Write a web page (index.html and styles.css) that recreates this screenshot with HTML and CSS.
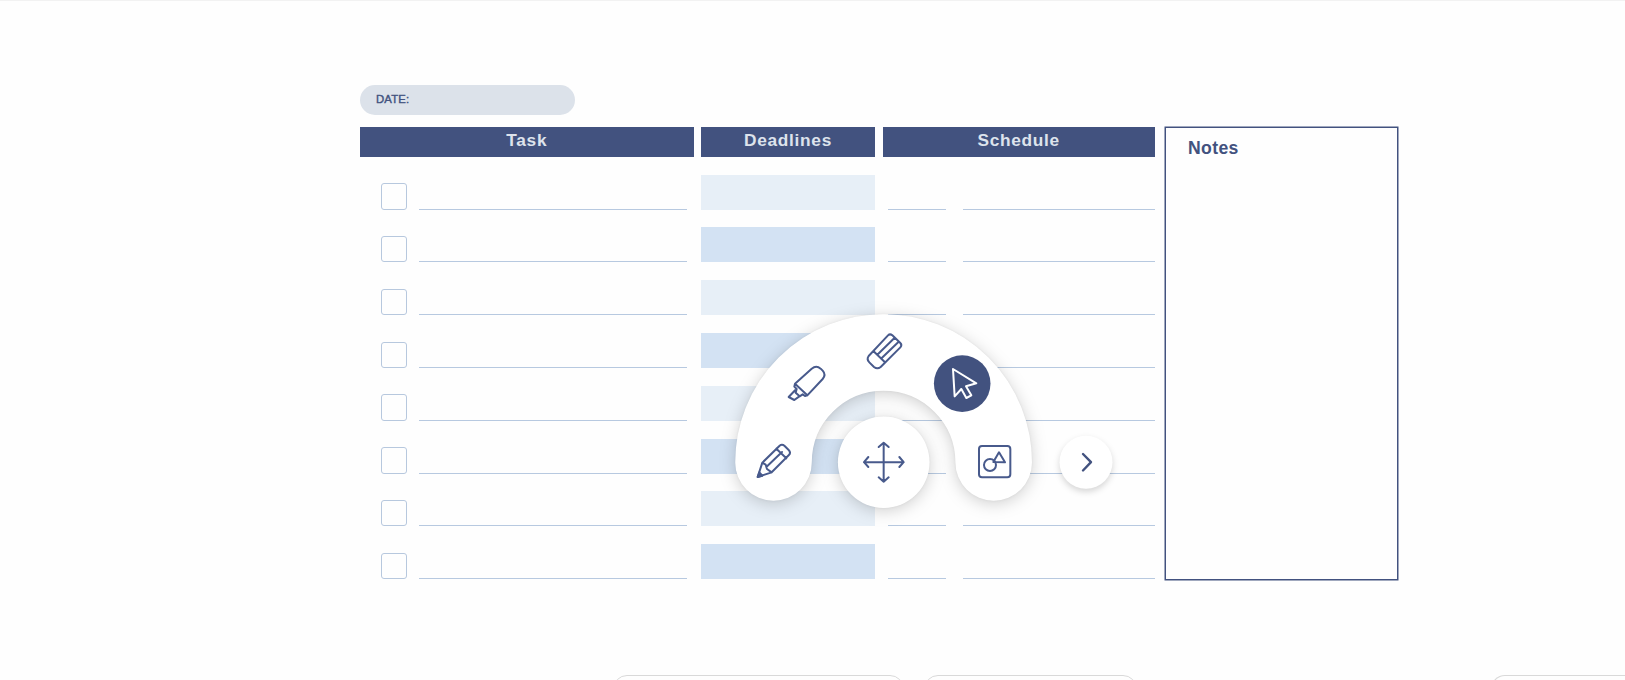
FILE: index.html
```
<!DOCTYPE html>
<html lang="en">
<head>
<meta charset="utf-8">
<title>Daily planner</title>
<link rel="stylesheet" href="styles.css">
</head>
<body>
<main class="planner">
  <div class="sheet">
    <div class="date">DATE:</div>
    <div class="columns">
      <section class="tasks">
        <h2 class="head">Task</h2>
        <div class="row"><span class="check"></span><span class="line"></span></div>
        <div class="row"><span class="check"></span><span class="line"></span></div>
        <div class="row"><span class="check"></span><span class="line"></span></div>
        <div class="row"><span class="check"></span><span class="line"></span></div>
        <div class="row"><span class="check"></span><span class="line"></span></div>
        <div class="row"><span class="check"></span><span class="line"></span></div>
        <div class="row"><span class="check"></span><span class="line"></span></div>
        <div class="row"><span class="check"></span><span class="line"></span></div>
      </section>
      <section class="deadlines">
        <h2 class="head">Deadlines</h2>
        <div class="row"><span class="bar"></span></div>
        <div class="row"><span class="bar bar-dark"></span></div>
        <div class="row"><span class="bar"></span></div>
        <div class="row"><span class="bar bar-dark"></span></div>
        <div class="row"><span class="bar"></span></div>
        <div class="row"><span class="bar bar-dark"></span></div>
        <div class="row"><span class="bar"></span></div>
        <div class="row"><span class="bar bar-dark"></span></div>
      </section>
      <section class="schedule">
        <h2 class="head">Schedule</h2>
        <div class="row"><span class="line time"></span><span class="line"></span></div>
        <div class="row"><span class="line time"></span><span class="line"></span></div>
        <div class="row"><span class="line time"></span><span class="line"></span></div>
        <div class="row"><span class="line time"></span><span class="line"></span></div>
        <div class="row"><span class="line time"></span><span class="line"></span></div>
        <div class="row"><span class="line time"></span><span class="line"></span></div>
        <div class="row"><span class="line time"></span><span class="line"></span></div>
        <div class="row"><span class="line time"></span><span class="line"></span></div>
      </section>
      <aside class="notes">Notes</aside>
    </div>
  </div>
  <footer class="cards">
    <div class="card card-a"></div>
    <div class="card card-b"></div>
    <div class="card card-c"></div>
  </footer>
  <svg class="menu" viewBox="700 280 440 260" width="440" height="260">
    <path class="arc shadow" d="M773.5 463.4A110 110 0 0 1 993.7 463.4"/>
    <circle class="disc shadow" cx="883.7" cy="463.2" r="45.8"/>
    <circle class="disc shadow-small" cx="1086" cy="463.2" r="26.5"/>
    <circle class="active" cx="962.2" cy="384.6" r="28.3"/>
    <!-- pencil and marker -->
    <g class="icon" transform="translate(720 300) scale(.33333)">
      <path d="M113 534L127 491L178 441Q186 434 194 441L206 453Q214 461 206 469L155 520ZM127 491L137 497L141 510L155 520M139 504L186 459M169 449L199 478"/>
      <path class="tip" d="M113 534L118 520L127 530Z"/>
      <path d="M225 254L275 209Q289 198 302 209L308 215Q319 227 308 240L262 289ZM225 254L223 263L230 270L227 281L239 292L248 286L255 291L262 289M226 273L206 294L223 303L238 292"/>
    </g>
    <!-- eraser, pointer and shapes -->
    <g class="icon" transform="translate(870 300) scale(.33333)">
      <path d="M-4 171L54 109Q60 103 67 109L91 132Q97 138 91 145L32 204Q22 212 12 204L-2 190Q-11 181 -4 171ZM10 156L45 190M22 167L74 116M33 179L86 128"/>
      <path class="pointer" d="M249 210L319 253L288 262L304 289L289 297L274 270L254 292Z"/>
      <rect x="327" y="441" width="94" height="94" rx="9"/>
      <circle cx="360" cy="498" r="18"/>
      <path d="M387 460L405 490L370 489Z"/>
      <path d="M41 431V548M-18 489.500H101M26 444L41 431L56 444M26 535L41 548L56 535M-5 474L-18 489.500L-5 504M88 474L101 489.500L88 504"/>
    </g>
    <path class="chevron" d="M1083 455L1091 463.200L1083 471.500"/>
  </svg>
</main>
</body>
</html>
```
FILE: styles.css
```
* { box-sizing: border-box; }
body {
  margin: 0;
  background: #fefefe;
  color: #42527f;
  font-family: "Liberation Sans", Arial, sans-serif;
  overflow: hidden;
}
.planner {
  position: relative;
  display: flex;
  flex-direction: column;
  justify-content: space-between;
  height: 680px;
  border-top: 1px solid #f2f2f2;
}
.sheet { padding: 84px 0 0 360px; }
.date {
  width: 215px;
  height: 30px;
  margin-bottom: 11.6px;
  padding-left: 16px;
  border-radius: 15px;
  background: #dce2ea;
  font-size: 11.3px;
  line-height: 29px;
  letter-spacing: .2px;
  -webkit-text-stroke: .4px #42527f;
}
.columns {
  display: grid;
  grid-template-columns: 333.5px 174px 272.3px 235.8px;
  column-gap: 7.5px;
}
.head {
  height: 30px;
  margin: 0 0 .3px;
  background: #42527f;
  color: #dde3ec;
  font-size: 17.3px;
  line-height: 27px;
  letter-spacing: .7px;
  text-align: center;
}
.row {
  display: flex;
  align-items: flex-end;
  height: 52.8px;
}
.check {
  width: 26.4px;
  height: 26.4px;
  margin-left: 20.6px;
  border: 1px solid #b7c8de;
  border-radius: 3px;
}
.line {
  flex: 1;
  height: 1px;
  background: #b7c9e0;
}
.tasks .line { margin: 0 6.5px 0 12.4px; }
.bar {
  flex: 1;
  height: 35px;
  background: #e7eff7;
}
.bar-dark { background: #d3e2f3; }
.schedule .row { gap: 17.5px; padding-left: 5.5px; }
.schedule .time { flex: 0 0 57.6px; }
.notes {
  height: 453px;
  margin: 0 0 0 2.6px;
  padding: 10.5px 22px;
  border: 1px solid #42527f;
  box-shadow: 0 0 0 .5px #42527f;
  font-size: 17.6px;
  font-weight: bold;
  line-height: 20px;
  letter-spacing: .4px;
}
.cards {
  display: flex;
  height: 5px;
  padding-left: 612.5px;
  overflow: hidden;
}
.card {
  height: 40px;
  border: 1px solid #d9d9d9;
  border-radius: 14px;
}
.card-a { flex: 0 0 291px; }
.card-b { flex: 0 0 213px; margin-left: 20px; }
.card-c {
  flex: 1;
  margin-left: 354px;
  border-right: 0;
  border-top-right-radius: 0;
}
.menu {
  position: absolute;
  left: 700px;
  top: 278px;
}
.arc {
  fill: none;
  stroke: #fff;
  stroke-width: 76.5;
  stroke-linecap: round;
}
.disc { fill: #fff; }
.shadow { filter: drop-shadow(0 3px 8px rgba(0, 0, 0, .18)) drop-shadow(0 0 1px rgba(0, 0, 0, .06)); }
.shadow-small { filter: drop-shadow(0 3px 3px rgba(0, 0, 0, .16)); }
.active { fill: #42527f; }
.icon {
  fill: none;
  stroke: #485a8c;
  stroke-width: 6;
  stroke-linecap: round;
  stroke-linejoin: round;
}
.tip { fill: #485a8c; }
.pointer { stroke: #fff; }
.chevron {
  fill: none;
  stroke: #42527f;
  stroke-width: 2.4;
  stroke-linecap: round;
  stroke-linejoin: round;
}
```
